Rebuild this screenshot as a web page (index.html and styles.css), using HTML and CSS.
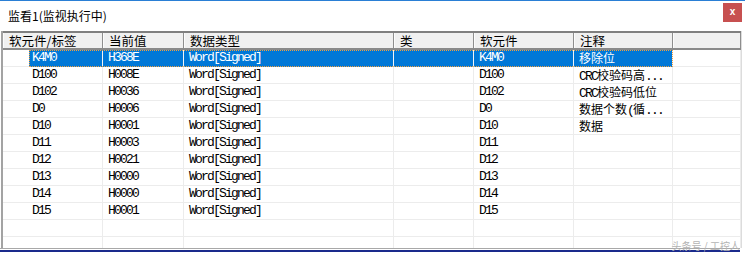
FILE: index.html
```html
<!DOCTYPE html>
<html lang="zh">
<head>
    <meta charset="UTF-8">
    <title>监看1</title>
    <link rel="stylesheet" href="styles.css">
</head>
<body>
    <div class="window">
        <div class="titlebar">
            <span class="title">监看1(监视执行中)</span>
            <span class="close">x</span>
        </div>
        <div class="grid">
            <div class="head">
                <div class="hc w1">软元件/标签</div>
                <div class="hc w2">当前值</div>
                <div class="hc w3">数据类型</div>
                <div class="hc w4">类</div>
                <div class="hc w5">软元件</div>
                <div class="hc w6">注释</div>
                <div class="hc w7"></div>
            </div>
            <div class="rows">
                <div class="row">
                    <div class="c lead"></div>
                    <div class="sel">
                        <div class="c w1b">K4M0</div>
                        <div class="c w2">H368E</div>
                        <div class="c w3">Word[Signed]</div>
                        <div class="c w4"></div>
                        <div class="c w5">K4M0</div>
                        <div class="c w6"><span class="cn">移除位</span></div>
                    </div>
                    <div class="c w7"></div>
                </div>
                <div class="row">
                    <div class="c lead"></div>
                    <div class="c w1b">D100</div>
                    <div class="c w2">H008E</div>
                    <div class="c w3">Word[Signed]</div>
                    <div class="c w4"></div>
                    <div class="c w5">D100</div>
                    <div class="c w6">CRC<span class="cn">校验码高</span>...</div>
                    <div class="c w7"></div>
                </div>
                <div class="row">
                    <div class="c lead"></div>
                    <div class="c w1b">D102</div>
                    <div class="c w2">H0036</div>
                    <div class="c w3">Word[Signed]</div>
                    <div class="c w4"></div>
                    <div class="c w5">D102</div>
                    <div class="c w6">CRC<span class="cn">校验码低位</span></div>
                    <div class="c w7"></div>
                </div>
                <div class="row">
                    <div class="c lead"></div>
                    <div class="c w1b">D0</div>
                    <div class="c w2">H0006</div>
                    <div class="c w3">Word[Signed]</div>
                    <div class="c w4"></div>
                    <div class="c w5">D0</div>
                    <div class="c w6"><span class="cn">数据个数</span>(<span class="cn">循</span>...</div>
                    <div class="c w7"></div>
                </div>
                <div class="row">
                    <div class="c lead"></div>
                    <div class="c w1b">D10</div>
                    <div class="c w2">H0001</div>
                    <div class="c w3">Word[Signed]</div>
                    <div class="c w4"></div>
                    <div class="c w5">D10</div>
                    <div class="c w6"><span class="cn">数据</span></div>
                    <div class="c w7"></div>
                </div>
                <div class="row">
                    <div class="c lead"></div>
                    <div class="c w1b">D11</div>
                    <div class="c w2">H0003</div>
                    <div class="c w3">Word[Signed]</div>
                    <div class="c w4"></div>
                    <div class="c w5">D11</div>
                    <div class="c w6"></div>
                    <div class="c w7"></div>
                </div>
                <div class="row">
                    <div class="c lead"></div>
                    <div class="c w1b">D12</div>
                    <div class="c w2">H0021</div>
                    <div class="c w3">Word[Signed]</div>
                    <div class="c w4"></div>
                    <div class="c w5">D12</div>
                    <div class="c w6"></div>
                    <div class="c w7"></div>
                </div>
                <div class="row">
                    <div class="c lead"></div>
                    <div class="c w1b">D13</div>
                    <div class="c w2">H0000</div>
                    <div class="c w3">Word[Signed]</div>
                    <div class="c w4"></div>
                    <div class="c w5">D13</div>
                    <div class="c w6"></div>
                    <div class="c w7"></div>
                </div>
                <div class="row">
                    <div class="c lead"></div>
                    <div class="c w1b">D14</div>
                    <div class="c w2">H0000</div>
                    <div class="c w3">Word[Signed]</div>
                    <div class="c w4"></div>
                    <div class="c w5">D14</div>
                    <div class="c w6"></div>
                    <div class="c w7"></div>
                </div>
                <div class="row">
                    <div class="c lead"></div>
                    <div class="c w1b">D15</div>
                    <div class="c w2">H0001</div>
                    <div class="c w3">Word[Signed]</div>
                    <div class="c w4"></div>
                    <div class="c w5">D15</div>
                    <div class="c w6"></div>
                    <div class="c w7"></div>
                </div>
                <div class="row">
                    <div class="c lead"></div>
                    <div class="c w1b"></div>
                    <div class="c w2"></div>
                    <div class="c w3"></div>
                    <div class="c w4"></div>
                    <div class="c w5"></div>
                    <div class="c w6"></div>
                    <div class="c w7"></div>
                </div>
                <div class="row">
                    <div class="c lead"></div>
                    <div class="c w1b"></div>
                    <div class="c w2"></div>
                    <div class="c w3"></div>
                    <div class="c w4"></div>
                    <div class="c w5"></div>
                    <div class="c w6"></div>
                    <div class="c w7"></div>
                </div>
            </div>
        </div>
        <div class="bottom-line"></div>
        <div class="mark">头条号 / 工控人</div>
    </div>
</body>
</html>
```

FILE: styles.css
```css
body {
    margin: 0;
    background: #fff;
}
.window {
    position: relative;
    width: 745px;
    height: 255px;
    overflow: hidden;
    border-top: 1px solid #2a7fd5;
    box-sizing: border-box;
    font-family: "Noto Sans CJK SC", "Liberation Sans", sans-serif;
}
.titlebar {
    height: 30px;
    display: flex;
    align-items: center;
    justify-content: space-between;
    padding-left: 8px;
    padding-right: 3px;
}
.title {
    font-size: 12px;
    line-height: 14px;
    color: #000;
}
.close {
    width: 19px;
    height: 19px;
    margin-top: -7px;
    background: #c75050;
    color: #fff;
    font-family: "Liberation Sans", sans-serif;
    font-weight: bold;
    font-size: 10px;
    line-height: 17px;
    text-align: center;
}
.grid {
    margin-left: 1px;
    width: 738px;
    border-left: 2px solid #a3a3a3;
    border-right: 1px solid #dcdcdc;
}
.head {
    display: flex;
    height: 19px;
    box-sizing: border-box;
    border-top: 2px solid #7f7f7f;
    border-bottom: 2px solid #8a8a8a;
    background: #f0f0f0;
}
.hc {
    box-sizing: border-box;
    height: 15px;
    padding-left: 5px;
    font-size: 12.5px;
    line-height: 15px;
    border-left: 1px solid #fcfcfc;
    border-right: 1px solid #8e8e8e;
    white-space: nowrap;
}
.w1 { width: 100px; }
.w1b { width: 74px; padding-left: 3px !important; }
.lead { width: 26px; }
.w2 { width: 81px; }
.w3 { width: 210px; }
.w4 { width: 80px; }
.w5 { width: 100px; }
.w6 { width: 99px; }
.w7 { width: 68px; }
.rows {
    height: 198px;
    overflow: hidden;
}
.row {
    display: flex;
    height: 17px;
}
.sel {
    display: flex;
    outline: 1px dotted #f0a040;
    outline-offset: -1px;
}
.c {
    box-sizing: border-box;
    height: 17px;
    padding-left: 5px;
    border-right: 1px solid #ececec;
    border-bottom: 1px solid #ececec;
    font-family: "Liberation Mono", monospace;
    font-size: 13px;
    letter-spacing: -1.8px;
    line-height: 16px;
    color: #000;
    white-space: nowrap;
    overflow: hidden;
}
.lead {
    border-right: none;
}
.sel .c {
    background: #0078d7;
    color: #fff;
    border-right-color: #f4f4f4;
    border-bottom-color: #0078d7;
}
.cn {
    font-family: "Noto Sans CJK SC", sans-serif;
    font-size: 12px;
    letter-spacing: 0;
}
.bottom-line {
    height: 1px;
    width: 740px;
    border-top: 1px solid #a8a8a8;
    border-bottom: 2px solid #1a2a8c;
}
.mark {
    position: absolute;
    right: 5px;
    bottom: 4px;
    font-size: 10px;
    line-height: 11px;
    color: #b4b4b4;
}
```
